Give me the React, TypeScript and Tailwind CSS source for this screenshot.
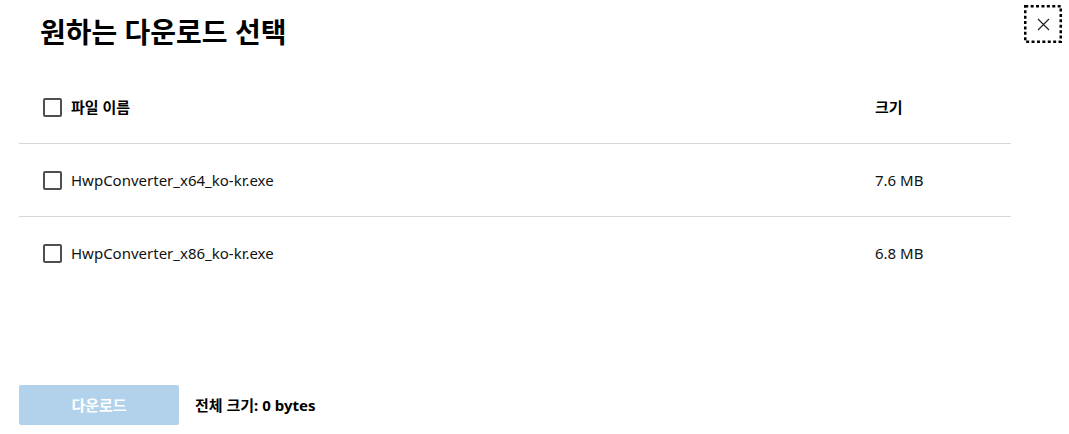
import React from "react";

const font = { fontFamily: '"Noto Sans", "Noto Sans CJK KR", sans-serif' };

function Box() {
  return <span className="inline-block w-[19px] h-[19px] border-2 border-[#4f4f4f] rounded-[2px] bg-white shrink-0" />;
}

function Row({ name, size, last }: { name: string; size: string; last?: boolean }) {
  return (
    <div className={last ? "flex items-center h-[73px]" : "flex items-center h-[73px] border-b border-[#d6d6d6]"}>
      <div className="flex items-center gap-[9px] pl-[24px] w-[856px]">
        <Box />
        <span className="text-[15px] text-[#111]">{name}</span>
      </div>
      <span className="text-[15px] text-[#111]">{size}</span>
    </div>
  );
}

export default function App() {
  return (
    <div className="w-[1069px] h-[434px] bg-white relative overflow-hidden" style={font}>
      <div className="pl-[40px] pt-[11px]">
        <h1 className="text-[28px] font-bold text-black leading-[42px]">원하는 다운로드 선택</h1>
      </div>
      <button className="absolute left-[1024px] top-[5px] w-[38px] h-[38px] flex items-center justify-center">
        <svg className="absolute inset-0" width="38" height="38" viewBox="0 0 38 38">
          <rect x="1.25" y="1.25" width="35.5" height="35.5" fill="none" stroke="#000" strokeWidth="2.5" strokeDasharray="3 2.4" />
        </svg>
        <svg width="13" height="13" viewBox="0 0 13 13">
          <path d="M1 1 L12 12 M12 1 L1 12" stroke="#222" strokeWidth="1.2" fill="none" />
        </svg>
      </button>
      <div className="ml-[19px] w-[992px] mt-[18px]">
        <div className="flex items-center h-[73px] border-b border-[#d6d6d6]">
          <div className="flex items-center gap-[9px] pl-[24px] w-[856px]">
            <Box />
            <span className="text-[15px] font-bold text-black">파일 이름</span>
          </div>
          <span className="text-[15px] font-bold text-black">크기</span>
        </div>
        <Row name="HwpConverter_x64_ko-kr.exe" size="7.6 MB" />
        <Row name="HwpConverter_x86_ko-kr.exe" size="6.8 MB" last />
      </div>
      <div className="absolute left-[19px] top-[385px] flex items-center gap-[16px]">
        <button className="w-[160px] h-[40px] bg-[#b2d2ec] text-white font-bold text-[15px] rounded-[2px]">다운로드</button>
        <span className="text-[15px] font-bold text-black">전체 크기: 0 bytes</span>
      </div>
    </div>
  );
}
